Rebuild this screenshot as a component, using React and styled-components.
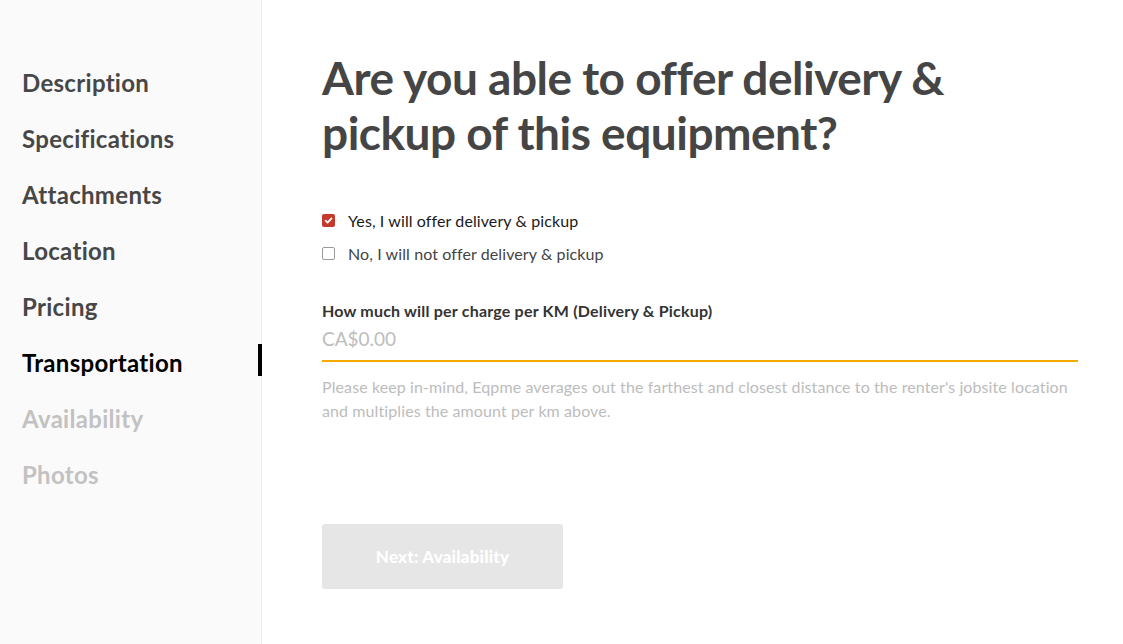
import styled, { createGlobalStyle } from 'styled-components';

const GlobalStyle = createGlobalStyle`
    html, body {
        margin: 0;
        padding: 0;
        background: #fff;
        font-family: Lato, "Open Sans", sans-serif;
    }
`;

const navItems = [
    { label: 'Description', state: 'done' },
    { label: 'Specifications', state: 'done' },
    { label: 'Attachments', state: 'done' },
    { label: 'Location', state: 'done' },
    { label: 'Pricing', state: 'done' },
    { label: 'Transportation', state: 'active' },
    { label: 'Availability', state: 'todo' },
    { label: 'Photos', state: 'todo' },
];

function App() {
    return (
        <>
            <GlobalStyle />
            <Screen>
                <Sidebar>
                    {navItems.map((item) => (
                        <NavItem key={item.label} $state={item.state}>
                            {item.label}
                        </NavItem>
                    ))}
                </Sidebar>
                <Main>
                    <Title>Are you able to offer delivery &amp; pickup of this equipment?</Title>
                    <Options>
                        <Option>
                            <Box $checked>
                                <svg width="9" height="9" viewBox="0 0 10 10">
                                    <path d="M1.8 5.2 L4 7.4 L8.3 2.6" fill="none" stroke="#fff" strokeWidth="2" strokeLinecap="round" strokeLinejoin="round" />
                                </svg>
                            </Box>
                            <OptionText $checked>Yes, I will offer delivery &amp; pickup</OptionText>
                        </Option>
                        <Option>
                            <Box />
                            <OptionText>No, I will not offer delivery &amp; pickup</OptionText>
                        </Option>
                    </Options>
                    <Field>
                        <FieldLabel>How much will per charge per KM (Delivery &amp; Pickup)</FieldLabel>
                        <Input placeholder="CA$0.00" />
                        <Help>
                            Please keep in-mind, Eqpme averages out the farthest and closest distance to the renter's jobsite location and multiplies the amount per km above.
                        </Help>
                    </Field>
                    <NextButton disabled>Next: Availability</NextButton>
                </Main>
            </Screen>
        </>
    );
}

export default App;

const Screen = styled.div`
    display: flex;
    width: 100%;
    height: 644px;
    overflow: hidden;
`;

const Sidebar = styled.nav`
    width: 262px;
    flex-shrink: 0;
    background: #fafafa;
    border-right: 1px solid #ececec;
    display: flex;
    flex-direction: column;
    padding-top: 65px;
    box-sizing: border-box;
`;

const NavItem = styled.div`
    position: relative;
    height: 56px;
    line-height: 36px;
    padding-left: 22px;
    font-size: 24px;
    font-weight: 700;
    letter-spacing: 0.3px;
    color: ${(p) => (p.$state === 'active' ? '#000' : p.$state === 'todo' ? '#c2c2c2' : '#474747')};

    &::after {
        content: '';
        display: ${(p) => (p.$state === 'active' ? 'block' : 'none')};
        position: absolute;
        right: -1px;
        top: -1px;
        width: 4px;
        height: 32px;
        background: #000;
    }
`;

const Main = styled.main`
    flex: 1;
    padding: 50px 44px 0 60px;
    display: flex;
    flex-direction: column;
    align-items: flex-start;
`;

const Title = styled.h1`
    margin: 0;
    width: 680px;
    font-size: 46px;
    line-height: 55px;
    font-weight: 700;
    color: #454545;
    letter-spacing: -0.5px;
`;

const Options = styled.div`
    margin-top: 49px;
    display: flex;
    flex-direction: column;
    gap: 11px;
`;

const Option = styled.label`
    display: flex;
    align-items: center;
    gap: 13px;
    height: 22px;
`;

const Box = styled.span`
    width: 13px;
    height: 13px;
    box-sizing: border-box;
    border-radius: 2px;
    display: flex;
    align-items: center;
    justify-content: center;
    background: ${(p) => (p.$checked ? '#c43a2c' : '#fff')};
    border: ${(p) => (p.$checked ? 'none' : '1px solid #9a9a9a')};
`;

const OptionText = styled.span`
    font-size: 16px;
    letter-spacing: 0.1px;
    color: ${(p) => (p.$checked ? '#1a1a1a' : '#444')};
`;

const Field = styled.div`
    margin-top: 36px;
    width: 756px;
    display: flex;
    flex-direction: column;
`;

const FieldLabel = styled.div`
    font-size: 16px;
    font-weight: 700;
    letter-spacing: 0.2px;
    color: #333;
    line-height: 22px;
`;

const Input = styled.input`
    border: none;
    border-bottom: 2px solid #f5aa00;
    outline: none;
    padding: 5px 0 10px;
    font-family: Lato, "Open Sans", sans-serif;
    font-size: 19px;
    color: #333;
    background: transparent;

    &::placeholder {
        color: #bdbdbd;
    }
`;

const Help = styled.p`
    margin: 13px 0 0;
    font-size: 16px;
    line-height: 24px;
    letter-spacing: 0.1px;
    color: #bcbcbc;
`;

const NextButton = styled.button`
    margin-top: 101px;
    width: 241px;
    height: 65px;
    border: none;
    border-radius: 3px;
    background: #e6e6e6;
    color: #fff;
    font-family: Lato, "Open Sans", sans-serif;
    font-size: 17px;
    font-weight: 900;
    letter-spacing: 0.2px;
`;
